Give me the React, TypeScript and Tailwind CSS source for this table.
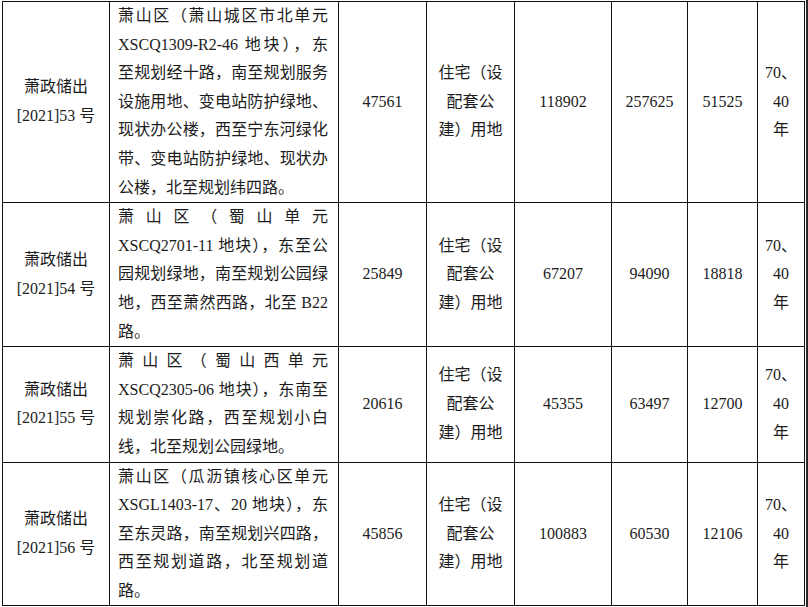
import React from "react";

type Row = {
  id: string;
  desc: string[];
  area: string;
  a: string;
  b: string;
  c: string;
};

const rows: Row[] = [
  {
    id: "53",
    desc: [
      "萧山区（萧山城区市北单元",
      "XSCQ1309-R2-46 地块），东",
      "至规划经十路，南至规划服务",
      "设施用地、变电站防护绿地、",
      "现状办公楼，西至宁东河绿化",
      "带、变电站防护绿地、现状办",
      "公楼，北至规划纬四路。",
    ],
    area: "47561",
    a: "118902",
    b: "257625",
    c: "51525",
  },
  {
    id: "54",
    desc: [
      "萧山区（蜀山单元",
      "XSCQ2701-11 地块），东至公",
      "园规划绿地，南至规划公园绿",
      "地，西至萧然西路，北至 B22",
      "路。",
    ],
    area: "25849",
    a: "67207",
    b: "94090",
    c: "18818",
  },
  {
    id: "55",
    desc: [
      "萧山区（蜀山西单元",
      "XSCQ2305-06 地块），东南至",
      "规划崇化路，西至规划小白",
      "线，北至规划公园绿地。",
    ],
    area: "20616",
    a: "45355",
    b: "63497",
    c: "12700",
  },
  {
    id: "56",
    desc: [
      "萧山区（瓜沥镇核心区单元",
      "XSGL1403-17、20 地块），东",
      "至东灵路，南至规划兴四路，",
      "西至规划道路，北至规划道",
      "路。",
    ],
    area: "45856",
    a: "100883",
    b: "60530",
    c: "12106",
  },
];

const cell = "bg-white flex flex-col items-center justify-center text-center";

export default function App() {
  return (
    <div
      lang="zh-CN"
      className="w-[808px] h-[607px] bg-white flex overflow-hidden text-[16px] leading-[28.6px] text-[#1c1c1c]"
      style={{ fontFamily: '"Liberation Serif", "Noto Sans CJK SC", serif' }}
    >
      <div className="ml-[2px] mt-[1px] self-start">
        <div className="grid grid-cols-[106px_228px_87px_87px_96px_75px_69px_46px] gap-px p-px bg-[#111]">
          {rows.map((r) => (
            <React.Fragment key={r.id}>
              <div className={cell}>
                <div>萧政储出</div>
                <div>[2021]{r.id} 号</div>
              </div>
              <div className="bg-white pl-[8px] pr-[10px]">
                {r.desc.map((line, i) => (
                  <div
                    key={i}
                    className={
                      i < r.desc.length - 1
                        ? "text-justify [text-align-last:justify]"
                        : "text-left"
                    }
                  >
                    {line}
                  </div>
                ))}
              </div>
              <div className={cell}>{r.area}</div>
              <div className={cell}>
                <div>住宅（设</div>
                <div>配套公</div>
                <div>建）用地</div>
              </div>
              <div className={cell}>{r.a}</div>
              <div className={cell}>{r.b}</div>
              <div className={cell}>{r.c}</div>
              <div className={cell}>
                <div>70、</div>
                <div>40</div>
                <div>年</div>
              </div>
            </React.Fragment>
          ))}
        </div>
      </div>
      <div className="ml-px w-[2px] h-full bg-[#2a2a2a]" />
    </div>
  );
}
